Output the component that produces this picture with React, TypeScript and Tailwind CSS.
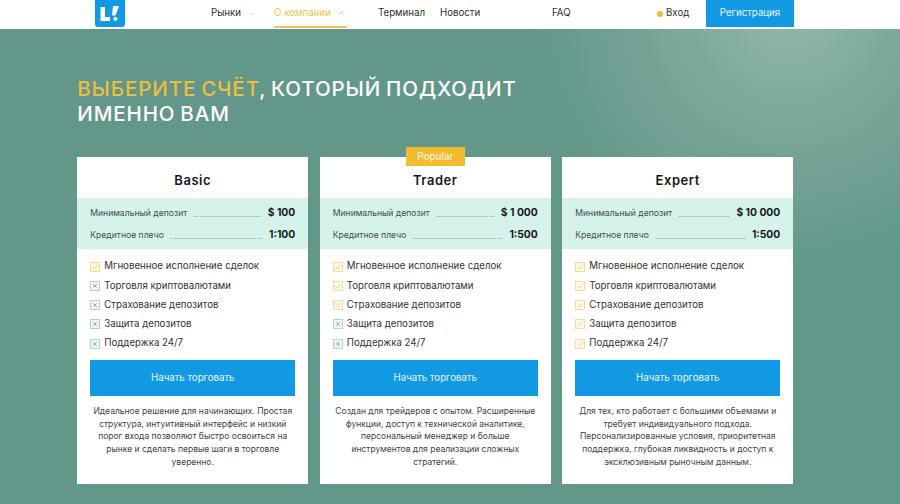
import React from "react";

const FEATURES = ["Мгновенное исполнение сделок", "Торговля криптовалютами", "Страхование депозитов", "Защита депозитов", "Поддержка 24/7"];

function Check({ on }: { on: boolean }) {
  if (on)
    return (
      <svg width="10" height="10" viewBox="0 0 10 10" className="shrink-0" fill="none">
        <rect x="0.5" y="0.5" width="9" height="9" fill="#fdf8e8" stroke="#f6dc97" />
        <path d="M2.6 5.2 4.3 7 7.6 2.9" stroke="#f2c658" strokeWidth="0.8" />
      </svg>
    );
  return (
    <svg width="10" height="10" viewBox="0 0 10 10" className="shrink-0" fill="none">
      <rect x="0.5" y="0.5" width="9" height="9" fill="#eef6f3" stroke="#b5d2ca" />
      <path d="M3.3 3.3 6.7 6.7M6.7 3.3 3.3 6.7" stroke="#7da79c" strokeWidth="0.9" />
    </svg>
  );
}

function Row({ label, value }: { label: string; value: string }) {
  return (
    <div className="flex items-center h-[22px] relative">
      <span className="text-[8.6px] text-[#444b4a] whitespace-nowrap">{label}</span>
      <span className="flex-1 mx-[7px] mt-[7px] border-b border-dotted border-[#9aa8a4]" />
      <span className="text-[10.3px] font-bold text-[#15191a] whitespace-nowrap">{value}</span>
    </div>
  );
}

function Card({ name, dep, lev, on, desc, popular }: { name: string; dep: string; lev: string; on: number; desc: string; popular?: boolean }) {
  return (
    <div className="relative w-[231px] h-[327px] bg-white flex flex-col shrink-0">
      {popular && (
        <div className="absolute left-[86px] top-[-10px] w-[59px] h-[19px] bg-[#f3bb2e] text-white/90 text-[10px] flex items-center justify-center">Popular</div>
      )}
      <div className="h-[41px] flex items-center justify-center pt-[6px] text-[13px] font-semibold tracking-[0.55px] text-[#15191a]">{name}</div>
      <div className="h-[51px] bg-[#d6f3eb] px-[13px] pt-[4px]">
        <Row label="Минимальный депозит" value={dep} />
        <Row label="Кредитное плечо" value={lev} />
      </div>
      <div className="px-[13px] pt-[8px] flex flex-col">
        {FEATURES.map((f, i) => (
          <div key={f} className="flex items-center gap-[4px] h-[19.25px] text-[9.7px] text-[#2f3534]">
            <Check on={i < on} />
            <span>{f}</span>
          </div>
        ))}
      </div>
      <button className="mx-[13px] mt-[7px] h-[36px] bg-[#1299e4] text-white/90 text-[9.7px]">Начать торговать</button>
      <p className="mt-[9px] px-[13px] text-center text-[8.5px] leading-[12.6px] text-[#3d4342]">{desc}</p>
    </div>
  );
}

function Chevron({ up, color }: { up?: boolean; color: string }) {
  return (
    <svg width="6" height="4" viewBox="0 0 6 4" fill="none" className="ml-[7px] shrink-0">
      <path d={up ? "M1 3 3 1 5 3" : "M1 1 3 3 5 1"} stroke={color} strokeWidth="0.7" />
    </svg>
  );
}

function Logo() {
  return (
    <svg width="30" height="27" viewBox="0 0 30 27" className="shrink-0">
      <path d="M0 0H30V24a3 3 0 0 1-3 3H3a3 3 0 0 1-3-3Z" fill="#1299e4" />
      <path d="M5.5 7H10V17H15V21H5.5Z" fill="#fff" />
      <path d="M18 6H24L20.5 15.5H17Z" fill="#fff" />
      <circle cx="20.5" cy="18.8" r="2.1" fill="#fff" />
    </svg>
  );
}

export default function App() {
  return (
    <div className="w-[900px] h-[504px] overflow-hidden flex flex-col font-['Inter',sans-serif] bg-[#62978a] bg-[radial-gradient(circle_at_790px_10px,#93b7ac_0,#7ba89b_110px,#62978a_260px)]">
      <header className="h-[29px] shrink-0 bg-white flex items-start">
        <div className="ml-[95px]"><Logo /></div>
        <nav className="ml-[86px] flex items-start h-[28px] text-[9.7px] text-[#2b2f30] whitespace-nowrap">
          <div className="flex items-center h-[27px] w-[63px]">Рынки<Chevron color="#e6cf8e" /></div>
          <div className="flex items-center h-[28px] w-[73px] text-[#eec14f] border-b-[2px] border-[#f3c34a]">О компании<Chevron up color="#e0b040" /></div>
          <div className="flex items-center h-[27px] ml-[31px] w-[62px]">Терминал</div>
          <div className="flex items-center h-[27px] w-[112px]">Новости</div>
          <div className="flex items-center h-[27px] w-[105px]">FAQ</div>
          <div className="flex items-center h-[27px] w-[49px]">
            <span className="w-[6px] h-[6px] rounded-full bg-[#f3bb2e] mr-[3px]" />Вход
          </div>
          <div className="flex items-center justify-center h-[27px] w-[88px] bg-[#1299e4] text-white/90">Регистрация</div>
        </nav>
      </header>
      <main className="flex-1 pl-[77.25px] pt-[47px]">
        <h1 className="text-[20.5px] leading-[25px] font-medium text-white tracking-[0.9px] [word-spacing:-1.5px]">
          <span className="text-[#f0bd3c]">ВЫБЕРИТЕ СЧЁТ</span>, КОТОРЫЙ ПОДХОДИТ
          <br />
          ИМЕННО ВАМ
        </h1>
        <div className="flex gap-[11.5px] mt-[31px]">
          <Card name="Basic" dep="$ 100" lev="1:100" on={1} desc="Идеальное решение для начинающих. Простая структура, интуитивный интерфейс и низкий порог входа позволяют быстро освоиться на рынке и сделать первые шаги в торговле уверенно." />
          <Card popular name="Trader" dep="$ 1 000" lev="1:500" on={3} desc="Создан для трейдеров с опытом. Расширенные функции, доступ к технической аналитике, персональный менеджер и больше инструментов для реализации сложных стратегий." />
          <Card name="Expert" dep="$ 10 000" lev="1:500" on={5} desc="Для тех, кто работает с большими объемами и требует индивидуального подхода. Персонализированные условия, приоритетная поддержка, глубокая ликвидность и доступ к эксклюзивным рыночным данным." />
        </div>
      </main>
    </div>
  );
}
